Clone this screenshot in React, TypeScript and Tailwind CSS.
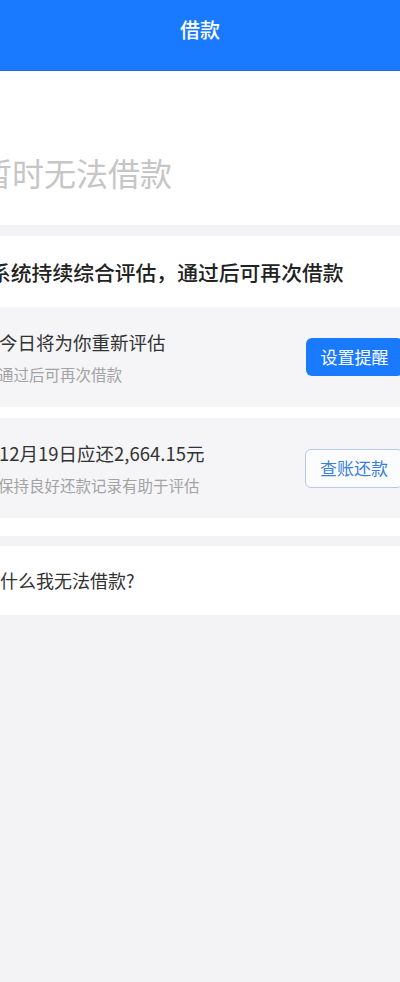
import React from "react";

const font = { fontFamily: '"Noto Sans CJK SC", "Noto Sans", sans-serif' };

const InfoCard = ({
  title,
  desc,
  action,
  primary,
}: {
  title: string;
  desc: string;
  action: string;
  primary?: boolean;
}) => {
  return (
    <div className="flex h-[100px] items-center justify-between bg-[#f5f5f7] -mr-[3px]">
      <div className="flex flex-col gap-[8px] -ml-[1px]">
        <span className="text-[18.5px] leading-[26px] text-[#333333] whitespace-nowrap">{title}</span>
        <span className="text-[15.5px] leading-[22px] text-[#a3a3a3] -ml-[1px] whitespace-nowrap">{desc}</span>
      </div>
      {primary ? (
        <button className="h-[38px] w-[97px] rounded-[6px] bg-[#1a7aff] text-[17px] text-white">
          {action}
        </button>
      ) : (
        <button className="h-[39px] w-[98px] rounded-[6px] border border-[#b5cbe8] bg-[#fbfcfe] text-[17px] text-[#3c7fd8]">
          {action}
        </button>
      )}
    </div>
  );
};

const App = () => {
  return (
    <div className="min-h-[982px] w-full overflow-hidden bg-[#f3f3f5]" style={font}>
      {/* header */}
      <div className="flex h-[71px] justify-center bg-[#1a7aff] pt-[16px] border-b border-[#1670ee]">
        <span className="text-[20px] leading-[28px] font-medium text-white">借款</span>
      </div>

      {/* status */}
      <div className="bg-white pt-[81px] pb-[33px]">
        <div className="-ml-[20px] text-[32px] leading-[40px] text-[#c6c6c6] whitespace-nowrap">
          暂时无法借款
        </div>
      </div>

      {/* evaluation */}
      <div className="mt-[11px] bg-white pt-[22px] pb-[18px]">
        <div className="-ml-[10px] mb-[21px] text-[20.8px] leading-[28px] font-medium text-[#222222] whitespace-nowrap">
          系统持续综合评估，通过后可再次借款
        </div>
        <div className="flex flex-col gap-[11px]">
          <InfoCard title="今日将为你重新评估" desc="通过后可再次借款" action="设置提醒" primary />
          <InfoCard
            title="12月19日应还2,664.15元"
            desc="保持良好还款记录有助于评估"
            action="查账还款"
          />
        </div>
      </div>

      {/* faq */}
      <div className="mt-[10px] flex h-[69px] items-center bg-white">
        <span className="-ml-[18px] text-[18px] text-[#333333] whitespace-nowrap">为什么我无法借款?</span>
      </div>
    </div>
  );
};

export default App;
